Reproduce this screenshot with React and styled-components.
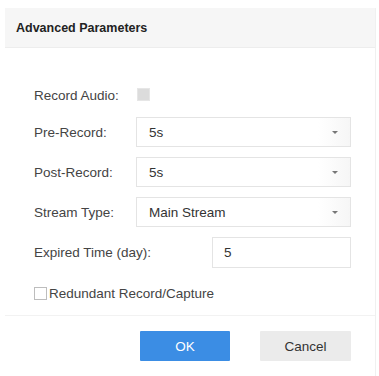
import React from "react";
import styled, { createGlobalStyle } from "styled-components";

const GlobalStyle = createGlobalStyle`
  html, body {
    margin: 0;
    padding: 0;
    background: #fff;
  }
  body {
    font-family: "Liberation Sans", Arial, sans-serif;
    color: #333;
  }
`;

const Dialog = styled.div`
  margin: 8px 3px 0 5px;
  background: #fff;
  border-right: 1px solid #f0f0f0;
`;

const Header = styled.div`
  height: 39px;
  display: flex;
  align-items: center;
  padding-left: 11px;
  background: #f6f6f6;
  border-bottom: 1px solid #ededed;
  font-size: 12.5px;
  font-weight: bold;
  color: #222;
`;

const Form = styled.div`
  padding: 36px 24px 0 29px;
  display: flex;
  flex-direction: column;
  gap: 10px;
`;

const Row = styled.div`
  display: flex;
  align-items: center;
  height: ${p => p.$h || 30}px;
`;

const Label = styled.div`
  width: ${p => p.$w || 102}px;
  flex: none;
  font-size: 13.5px;
  color: #444;
`;

const FakeCheck = styled.span`
  width: 11px;
  height: 11px;
  background: #dcdcdc;
  border: 1px solid #e6e6e6;
  margin-left: 1px;
  margin-top: -2px;
`;

const Select = styled.div`
  flex: 1;
  height: 30px;
  box-sizing: border-box;
  border: 1px solid #e4e4e4;
  display: flex;
  align-items: center;
  padding-left: 12px;
  font-size: 13.5px;
  color: #333;
  background: linear-gradient(to right, #fff 0, #fff 85%, #f6f6f6 100%);
`;

const SelectText = styled.span`
  flex: 1;
`;

const Arrow = styled.span`
  width: 0;
  height: 0;
  border-left: 3px solid transparent;
  border-right: 3px solid transparent;
  border-top: 3px solid #777;
  margin-right: 12px;
`;

const Input = styled.div`
  width: 139px;
  margin-left: auto;
  height: 31px;
  box-sizing: border-box;
  border: 1px solid #e4e4e4;
  display: flex;
  align-items: center;
  padding-left: 11px;
  font-size: 13.5px;
  color: #333;
`;

const CheckRow = styled.label`
  display: flex;
  align-items: center;
  gap: 2px;
  font-size: 13.5px;
  color: #444;
  margin-top: 8px;
`;

const Box = styled.span`
  width: 13px;
  height: 13px;
  box-sizing: border-box;
  border: 1px solid #bdbdbd;
  background: #fff;
`;

const Footer = styled.div`
  margin-top: 14px;
  border-top: 1px solid #f2f2f2;
  display: flex;
  justify-content: flex-end;
  gap: 30px;
  padding: 15px 24px 15px 0;
`;

const Button = styled.button`
  width: ${p => p.$w || 91}px;
  height: 30px;
  border: none;
  border-radius: 1px;
  font-family: "Liberation Sans", Arial, sans-serif;
  font-size: 13.5px;
  background: ${p => (p.$primary ? "#3b8de4" : "#ebebeb")};
  color: ${p => (p.$primary ? "#fff" : "#333")};
`;

const Dropdown = ({ value }) => (
  <Select>
    <SelectText>{value}</SelectText>
    <Arrow />
  </Select>
);

export default function App() {
  return (
    <>
      <GlobalStyle />
      <Dialog>
        <Header>Advanced Parameters</Header>
        <Form>
          <Row $h={23}>
            <Label>Record Audio:</Label>
            <FakeCheck />
          </Row>
          <Row>
            <Label>Pre-Record:</Label>
            <Dropdown value="5s" />
          </Row>
          <Row>
            <Label>Post-Record:</Label>
            <Dropdown value="5s" />
          </Row>
          <Row>
            <Label>Stream Type:</Label>
            <Dropdown value="Main Stream" />
          </Row>
          <Row $h={31}>
            <Label $w={150}>Expired Time (day):</Label>
            <Input>5</Input>
          </Row>
          <CheckRow>
            <Box />
            Redundant Record/Capture
          </CheckRow>
        </Form>
        <Footer>
          <Button $primary $w={90}>OK</Button>
          <Button>Cancel</Button>
        </Footer>
      </Dialog>
    </>
  );
}
